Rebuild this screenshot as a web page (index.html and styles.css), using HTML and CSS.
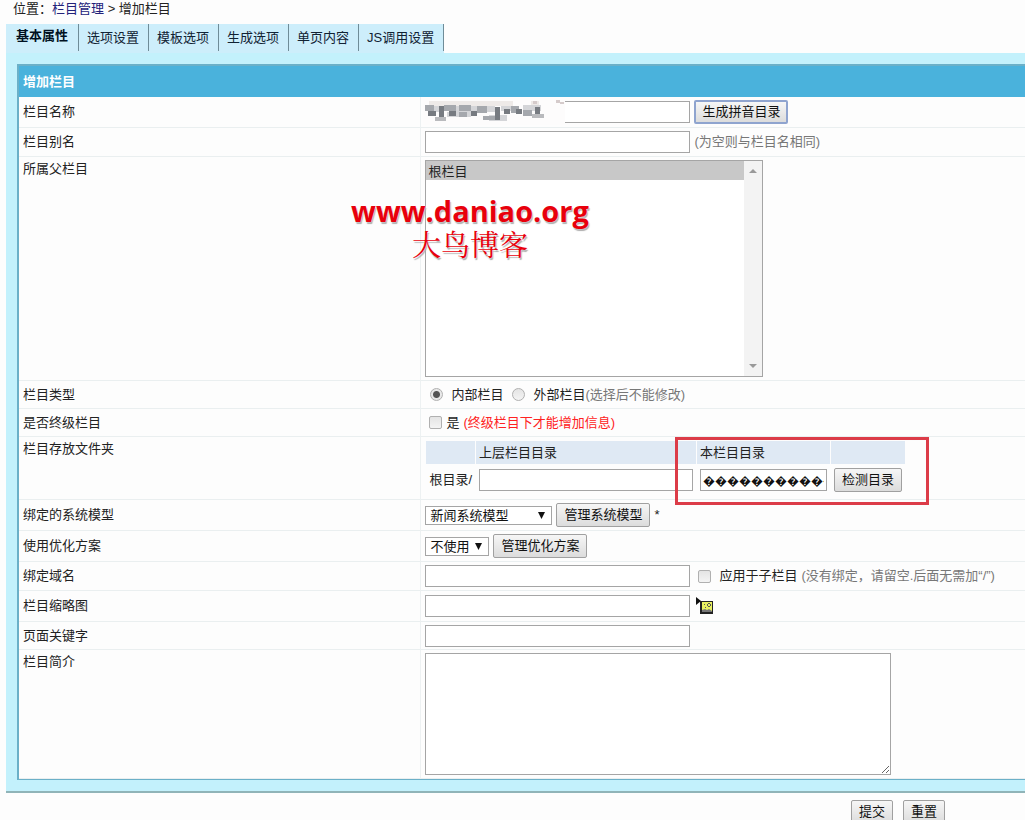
FILE: index.html
```html
<!DOCTYPE html>
<html lang="zh-CN">
<head>
  <meta charset="UTF-8">
  <meta name="viewport" content="width=device-width, initial-scale=1.0">
  <title>增加栏目</title>
  <link rel="stylesheet" href="styles.css">
</head>
<body>
  <div class="position">位置：<a href="#">栏目管理</a> &gt; 增加栏目</div>

  <form action="#" method="post">
    <nav class="tabs">
      <a href="#" class="tab selected">基本属性</a>
      <a href="#" class="tab">选项设置</a>
      <a href="#" class="tab">模板选项</a>
      <a href="#" class="tab">生成选项</a>
      <a href="#" class="tab">单页内容</a>
      <a href="#" class="tab">JS调用设置</a>
    </nav>

    <div class="panel">
      <table class="form-table">
        <thead>
          <tr><th colspan="2" class="title">增加栏目</th></tr>
        </thead>
        <tbody>
          <tr class="tall">
            <th><label for="classname">栏目名称</label></th>
            <td>
              <div class="field">
                <div class="name-box">
                  <input type="text" id="classname" class="text">
                  <!-- 名称打码 -->
                  <svg class="mosaic" width="142" height="28" viewBox="0 0 142 28" aria-hidden="true">
                    <path fill="#fdfcfc" d="M0 3h142v25H0z"/>
                    <path fill="#eeeae8" d="M6 4h84v5H6zM108 4h8v5h-8z"/>
                    <path fill="#d4d5d8" d="M5 9h12v6H5zM30 9h42v6H30zM78 9h16v5H78zM24 15h24v5H24zM66 18h18v6H66zM100 8h18v6h-18z"/>
                    <path fill="#a5a8ad" d="M2 8h9v6H2zM21 8h12v6H21zM36 8h12v6H36zM54 9h10v7H54zM88 9h8v7H88zM36 15h8v5h-8zM100 13h9v6h-9zM60 19h14v4H60z"/>
                    <path fill="#777b81" d="M5 14h8v5H5zM16 9h5v11h-5zM26 14h7v5h-7zM48 14h6v5h-6zM72 10h5v13h-5zM81 12h6v5h-6zM93 12h6v5h-6zM112 10h5v9h-5z"/>
                    <path fill="#b9babd" d="M12 20h11v4H12zM109 17h12v4h-12z"/>
                    <path fill="#d5cbcb" d="M110 4h4v3h-4zM133 3h4v3h-4zM137 5h4v2h-4z"/>
                  </svg>
                </div>
                <button type="button" class="btn focus">生成拼音目录</button>
              </div>
            </td>
          </tr>
          <tr>
            <th><label for="alias">栏目别名</label></th>
            <td>
              <div class="field">
                <input type="text" id="alias" class="text">
                <span class="hint">(为空则与栏目名相同)</span>
              </div>
            </td>
          </tr>
          <tr class="top">
            <th><label for="parent">所属父栏目</label></th>
            <td>
              <div class="list-box">
                <select id="parent" class="list" size="12">
                  <option selected>根栏目</option>
                </select>
                <div class="scrollbar" aria-hidden="true">
                  <svg width="8" height="4" viewBox="0 0 8 4"><path d="M0 4l4-4 4 4z" fill="#999"/></svg>
                  <svg width="8" height="4" viewBox="0 0 8 4"><path d="M0 0l4 4 4-4z" fill="#999"/></svg>
                </div>
              </div>
            </td>
          </tr>
          <tr class="short">
            <th>栏目类型</th>
            <td>
              <div class="field">
                <label class="choice radio"><input type="radio" name="type" checked> 内部栏目</label>
                <label class="choice radio"><input type="radio" name="type"> <span>外部栏目<span class="hint">(选择后不能修改)</span></span></label>
              </div>
            </td>
          </tr>
          <tr class="short">
            <th>是否终级栏目</th>
            <td>
              <div class="field">
                <label class="choice"><input type="checkbox"> 是</label>
                <span class="warn">(终级栏目下才能增加信息)</span>
              </div>
            </td>
          </tr>
          <tr class="top">
            <th>栏目存放文件夹</th>
            <td>
              <div class="folder">
                <table class="folder-table">
                  <thead>
                    <tr>
                      <th></th>
                      <th><label for="updir">上层栏目目录</label></th>
                      <th><label for="dir">本栏目目录</label></th>
                      <th></th>
                    </tr>
                  </thead>
                  <tbody>
                    <tr>
                      <td>根目录/</td>
                      <td><input type="text" id="updir" class="text updir"></td>
                      <td><input type="text" id="dir" class="text dir" value="�����������"></td>
                      <td><button type="button" class="btn">检测目录</button></td>
                    </tr>
                  </tbody>
                </table>
                <div class="mark"></div>
              </div>
            </td>
          </tr>
          <tr class="tall">
            <th><label for="model">绑定的系统模型</label></th>
            <td>
              <div class="field">
                <select id="model" class="drop model"><option>新闻系统模型</option></select>
                <button type="button" class="btn">管理系统模型</button>
                <span>*</span>
              </div>
            </td>
          </tr>
          <tr class="tall">
            <th><label for="plan">使用优化方案</label></th>
            <td>
              <div class="field">
                <select id="plan" class="drop plan"><option>不使用</option></select>
                <button type="button" class="btn">管理优化方案</button>
              </div>
            </td>
          </tr>
          <tr>
            <th><label for="domain">绑定域名</label></th>
            <td>
              <div class="field">
                <input type="text" id="domain" class="text">
                <label class="choice sub"><input type="checkbox"> 应用于子栏目</label>
                <span class="hint">(没有绑定，请留空.后面无需加“/”)</span>
              </div>
            </td>
          </tr>
          <tr class="tall">
            <th><label for="thumb">栏目缩略图</label></th>
            <td>
              <div class="field">
                <input type="text" id="thumb" class="text">
                <a href="#" class="pick" title="选择图片">
                  <svg width="18" height="18" viewBox="0 0 18 18">
                    <path d="M0 0l5 4-5 4z" fill="#111"/>
                    <path d="M4 4h13v13H4z" fill="#222"/>
                    <path d="M6 5h10v10H6z" fill="#e8f060"/>
                    <path d="M6 15v-2l3-1 2 1 2-1 3 2v1z" fill="#777"/>
                    <path d="M12 6h2v1h-2zM11 7h1v2h-1zM14 7h1v2h-1zM12 9h2v1h-2zM8 7h1v1H8zM9 10h1v1H9z" fill="#555"/>
                  </svg>
                </a>
              </div>
            </td>
          </tr>
          <tr class="short">
            <th><label for="keywords">页面关键字</label></th>
            <td><div class="field"><input type="text" id="keywords" class="text"></div></td>
          </tr>
          <tr class="top">
            <th><label for="intro">栏目简介</label></th>
            <td><textarea id="intro" class="intro"></textarea></td>
          </tr>
        </tbody>
      </table>
    </div>

    <div class="actions">
      <button type="submit" class="btn">提交</button>
      <button type="reset" class="btn">重置</button>
    </div>
  </form>

  <div class="watermark">
    <div class="site">www.daniao.org</div>
    <div class="blog">大鸟博客</div>
  </div>
</body>
</html>
```
FILE: styles.css
```css
* {
  box-sizing: border-box;
}

body {
  position: relative;
  min-height: 100vh;
  margin: 0;
  background: #fdfdfd;
  color: #222;
  font-family: "Liberation Sans", "Noto Sans CJK SC", sans-serif;
  font-size: 13px;
  line-height: 18px;
  overflow-x: hidden;
}

input, select, button, textarea {
  margin: 0;
  font: inherit;
  color: #111;
}

.position {
  padding: 0 13px;
  height: 24px;
}

.position a {
  color: #22227a;
  text-decoration: none;
}

/* 选项卡 */
.tabs {
  display: flex;
  width: max-content;
  margin-left: 6px;
  background: #cdeefb;
}

.tab {
  height: 29px;
  padding: 5px 9px 5px 8px;
  background: linear-gradient(90deg, #6f8c98, #6f8c98) right top / 1px 27px no-repeat;
  border-right: 1px solid transparent;
  background-origin: border-box;
  color: #123;
  text-decoration: none;
}

.tab.selected {
  padding: 3px 10px;
  color: #012;
  font-weight: bold;
}

/* 主面板 */
.panel {
  margin-left: 6px;
  padding: 11px 0 11px 11px;
  background: #c3f1fc;
  border-bottom: 2px solid #90b4b8;
}

.form-table {
  width: 100%;
  border-spacing: 0;
  background: #fdfdfd;
  border: 1px solid #6bb0c8;
  border-width: 2px 0 1px 2px;
}

.form-table > thead .title {
  height: 31px;
  padding: 0 4px;
  background: #4ab2dc;
  color: #fff;
  text-align: left;
}

.form-table > tbody > tr > th,
.form-table > tbody > tr > td {
  height: 29px;
  padding: 0 4px;
  border-bottom: 1px solid #eaeff0;
  text-align: left;
  font-weight: normal;
}

.form-table > tbody > tr > th {
  width: 40%;
  border-right: 1px solid #edf1f2;
}

.form-table > tbody > .tall > th,
.form-table > tbody > .tall > td {
  height: 31px;
}

.form-table > tbody > .short > th,
.form-table > tbody > .short > td {
  height: 28px;
}

.form-table > tbody > .top > th,
.form-table > tbody > .top > td {
  padding-top: 3px;
  padding-bottom: 3px;
  vertical-align: top;
}

.field {
  display: flex;
  align-items: center;
  gap: 4px;
}

.hint {
  color: #777;
}

.warn {
  color: #f22;
}

.text {
  width: 265px;
  height: 22px;
  padding: 0 3px;
  background: #fff;
  border: 1px solid #a5a5a5;
}

.name-box {
  position: relative;
  display: flex;
}

.mosaic {
  position: absolute;
  top: -4px;
  left: -2px;
}

.btn {
  height: 24px;
  padding: 0 7px;
  background: linear-gradient(#f6f6f6, #dcdcdc);
  border: 1px solid #a0a0a0;
  border-radius: 2px;
  white-space: nowrap;
}

.btn.focus {
  border: 2px solid #8fa4cf;
  padding: 0 6px;
}

/* 父栏目列表 */
.list-box {
  position: relative;
  width: 338px;
}

.list {
  display: block;
  width: 100%;
  height: 217px;
  padding: 0;
  background: #fff;
  border: 1px solid #a5a5a5;
  border-radius: 0;
}

.list option {
  min-height: 18px;
  padding: 0 2px;
  line-height: 18px;
}

.list option:checked {
  background: #c8c8c8 linear-gradient(#c8c8c8, #c8c8c8);
  color: #222;
}

.scrollbar {
  position: absolute;
  top: 1px;
  right: 1px;
  bottom: 1px;
  width: 18px;
  padding: 8px 0;
  display: flex;
  flex-direction: column;
  align-items: center;
  justify-content: space-between;
  background: #f3f3f3;
}

.drop {
  height: 19px;
  padding: 0 4px;
  appearance: none;
  background: #fff url("data:image/svg+xml,%3Csvg xmlns='http://www.w3.org/2000/svg' width='7' height='7'%3E%3Cpath d='M0 0h7L3.5 7z' fill='%23111'/%3E%3C/svg%3E") right 6px center no-repeat;
  border: 1px solid #a5a5a5;
  border-radius: 0;
  line-height: 17px;
}

.model {
  width: 127px;
}

.plan {
  width: 64px;
}

.choice {
  display: flex;
  align-items: center;
  gap: 4px;
}

.choice.radio {
  gap: 8px;
  padding-left: 5px;
}

.choice.sub {
  gap: 8px;
}

.choice input {
  width: 13px;
  height: 13px;
  flex: none;
  appearance: none;
  background: linear-gradient(#e4e4e4, #f4f4f4);
  border: 1px solid #b0b0b0;
  border-radius: 2px;
}

.choice input[type="checkbox"] {
  margin-left: 4px;
}

.choice input[type="radio"] {
  border-radius: 50%;
}

.choice input[type="radio"]:checked {
  background: radial-gradient(circle, #555 0 3px, #e8e8e8 4px);
}

/* 存放文件夹 */
.folder {
  position: relative;
  width: max-content;
}

.folder-table {
  border-spacing: 1px;
}

.folder-table th {
  height: 23px;
  padding: 0 3px;
  background: #dfe9f4;
  font-weight: normal;
  text-align: left;
}

.folder-table td {
  height: 30px;
  padding: 0 3px;
  white-space: nowrap;
}

.updir {
  width: 214px;
}

.dir {
  width: 127px;
  padding: 0 2px;
  font-size: 12px;
}

.mark {
  position: absolute;
  top: -3px;
  right: -23px;
  width: 254px;
  height: 68px;
  border: 3px solid #dc3c48;
}

.pick {
  display: flex;
  margin-left: 2px;
}

.intro {
  display: block;
  width: 466px;
  height: 122px;
  background: #fff;
  border: 1px solid #a5a5a5;
}

.actions {
  display: flex;
  justify-content: flex-end;
  gap: 10px;
  padding: 7px 80px 0 0;
}

/* 水印 */
.watermark {
  position: absolute;
  top: 193px;
  left: 349px;
  width: 242px;
  color: #e8000c;
  text-align: center;
  pointer-events: none;
  text-shadow: 0 0 2px #fff, 1px 2px 1px #aaa;
}

.site {
  font: bold 29px/36px "Open Sans", sans-serif;
}

.blog {
  font: 29px/34px "Liberation Serif", "Noto Serif CJK SC", "Noto Sans CJK SC", serif;
}
```
